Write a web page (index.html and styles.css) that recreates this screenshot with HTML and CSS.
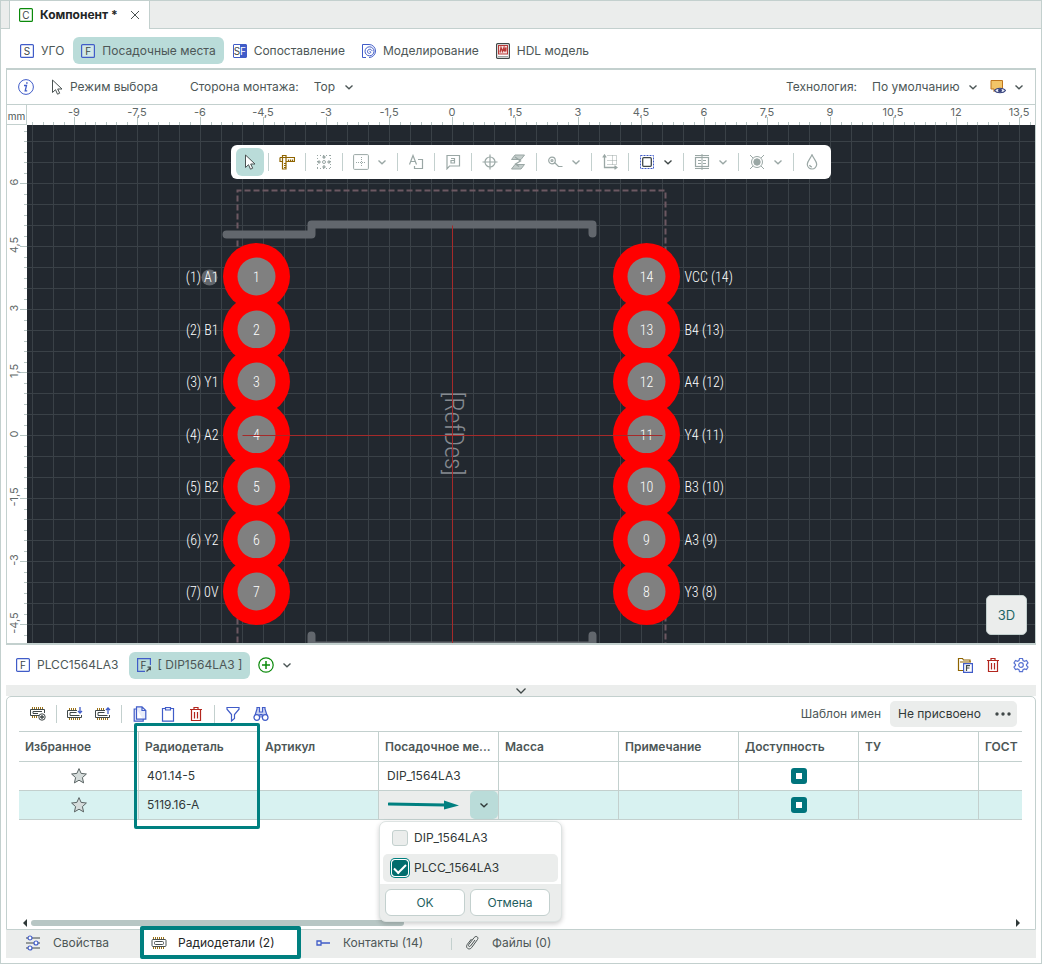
FILE: index.html
```html
<!DOCTYPE html>
<html lang="ru">
<head>
<meta charset="utf-8">
<title>Компонент</title>
<link rel="stylesheet" href="styles.css">
</head>
<body>
<svg class="sprite" aria-hidden="true">
  <symbol id="chevron" viewBox="0 0 10 10"><path d="M1.500 3.500 5 6.700 8.500 3.500" fill="none" stroke="currentColor" stroke-width="1.400"/></symbol>
  <symbol id="cursor" viewBox="0 0 16 16"><path d="M3.500 1v12.500l3-2.800 2 4.500 2.200-1-2-4.200h4.300z" fill="#fff" stroke="#4a5252" stroke-linejoin="round"/></symbol>
  <symbol id="sq" viewBox="0 0 14 14"><rect x=".6" y=".6" width="12.800" height="12.800" rx="1" fill="#fff" fill-opacity=".35" stroke="currentColor" stroke-width="1.200"/></symbol>
  <symbol id="trash" viewBox="0 0 16 16"><path d="M2 3.500h12M6 3V1.500h4V3M3.500 3.500v11h9v-11M6.500 6v6.500M9.500 6v6.500" fill="none" stroke="#b3261e" stroke-width="1.200"/></symbol>
  <symbol id="star" viewBox="0 0 16 16"><path d="m8 .6 2.100 4.800 5.300.6-4 3.600 1.200 5.300L8 12.200l-4.600 2.700 1.200-5.300L.6 6l5.300-.6z" fill="#d5dcdb" stroke="#5a6464" stroke-linejoin="round"/></symbol>
  <symbol id="chipbase" viewBox="0 0 16 16"><path d="M2.500 2v2M4.500 2v2M6.500 2v2M8.500 2v2M10.500 2v2M12.500 2v2M2.500 12v2M4.500 12v2M6.500 12v2M8.500 12v2M10.500 12v2M12.500 12v2" stroke="#9a7116"/><rect x="1" y="4.500" width="14" height="7" rx="1" fill="none" stroke="#4a5252"/><rect x="3.500" y="6.500" width="9" height="3" rx="1" fill="none" stroke="#4a5252"/></symbol>
</svg>

<div class="app">
  <header class="doc-tabs">
    <div class="doc-tab">
      <span class="letter green"><svg class="i14"><use href="#sq"/></svg><b>C</b></span>
      <strong>Компонент *</strong>
      <button class="close" type="button" aria-label="Закрыть"><svg viewBox="0 0 10 10" class="i10"><path d="m1 1 8 8M9 1 1 9" stroke="#4a5252" fill="none"/></svg></button>
    </div>
  </header>

  <nav class="modes">
    <button type="button" class="pill"><span class="letter"><svg class="i14"><use href="#sq"/></svg><b>S</b></span>УГО</button>
    <button type="button" class="pill active"><span class="letter"><svg class="i14"><use href="#sq"/></svg><b>F</b></span>Посадочные места</button>
    <button type="button" class="pill"><span class="letter duo"><b>S</b><b>F</b></span>Сопоставление</button>
    <button type="button" class="pill"><svg class="i14" viewBox="0 0 14 14" fill="none" stroke="#405cc8"><path d="M4 13.500H.5V.5H7a6.500 6.500 0 0 1 0 13"/><circle cx="7.500" cy="7.300" r="4.500"/><path d="M7.500 7.300a1.200 1.200 0 0 1 1.200 1.200c-.8 1.800-3.400.8-3.200-1.200.3-2.600 4-2.800 4.600-.2"/></svg>Моделирование</button>
    <button type="button" class="pill"><svg class="i14 tall" viewBox="0 0 14 16"><rect x=".6" y=".6" width="12.800" height="14.800" rx="1" fill="#fff" stroke="#404848" stroke-width="1.200"/><rect x="2.500" y="2.500" width="9" height="8.500" fill="#f6dcdb" stroke="#b83a38"/><path d="m4 9.500 1-5 1.500 4 1.500-4 .6 4 1.400-4-.2 4" fill="none" stroke="#b83a38" stroke-width="1.300"/><path d="M2.500 13.500h9" stroke="#404848" stroke-dasharray="1 1"/></svg>HDL модель</button>
  </nav>

  <main class="editor">
    <div class="options">
      <button class="bare info" type="button" aria-label="Информация"><svg class="i16" viewBox="0 0 16 16" fill="none" stroke="#405cc8"><circle cx="8" cy="8" r="7.400"/><path d="M6 6.500h2.500L7.200 11.800h2" stroke-width="1.300"/><circle cx="8.900" cy="4" r=".5"/></svg></button>
      <svg class="i16"><use href="#cursor"/></svg>
      <span class="mode-name">Режим выбора</span>
      <label for="side">Сторона монтажа:</label>
      <span class="pick"><select id="side"><option>Top</option></select><svg class="i10"><use href="#chevron"/></svg></span>
      <span class="grow"></span>
      <label for="tech">Технология:</label>
      <span class="pick"><select id="tech"><option>По умолчанию</option></select><svg class="i10"><use href="#chevron"/></svg></span>
      <button class="bare view" type="button" aria-label="Отображение"><svg class="i16" viewBox="0 0 16 16"><path d="M1 1.500h11.500V10H6.500L4 12.500V10H1z" fill="#f3c568" stroke="#c0761d"/><path d="M4.500 11.500c2-3 9-3 11 0-2 3-9 3-11 0z" fill="#e8ecf8" stroke="#39457e" stroke-width="1.200"/><circle cx="10" cy="11.500" r="2" fill="#39457e"/></svg><svg class="i10"><use href="#chevron"/></svg></button>
    </div>

    <div class="stage">
      <div class="corner">mm</div>
      <svg class="ruler" aria-hidden="true">
        <defs><pattern id="th" x="47" width="63" height="20" patternUnits="userSpaceOnUse"><path d="M.5 12v8M11.500 17v3M21.500 17v3M32.500 17v3M42.500 17v3M53.500 17v3" stroke="#b7c6c4"/></pattern></defs>
        <rect width="100%" height="20" fill="url(#th)"/>
        <g text-anchor="middle"><text x="47" y="11">-9</text><text x="110" y="11">-7,5</text><text x="173" y="11">-6</text><text x="236" y="11">-4,5</text><text x="299" y="11">-3</text><text x="362" y="11">-1,5</text><text x="425" y="11">0</text><text x="488" y="11">1,5</text><text x="551" y="11">3</text><text x="614" y="11">4,5</text><text x="677" y="11">6</text><text x="740" y="11">7,5</text><text x="803" y="11">9</text><text x="866" y="11">10,5</text><text x="929" y="11">12</text><text x="992" y="11">13,5</text></g>
      </svg>
      <svg class="ruler side" aria-hidden="true">
        <defs><pattern id="tv" y="58" width="20" height="63" patternUnits="userSpaceOnUse"><path d="M13 .5h7M17 11.500h3M17 21.500h3M17 32.500h3M17 42.500h3M17 53.500h3" stroke="#b7c6c4"/></pattern></defs>
        <rect width="20" height="100%" fill="url(#tv)"/>
        <g text-anchor="middle"><text transform="translate(11 57) rotate(-90)">6</text><text transform="translate(11 120) rotate(-90)">4,5</text><text transform="translate(11 183) rotate(-90)">3</text><text transform="translate(11 246) rotate(-90)">1,5</text><text transform="translate(11 309) rotate(-90)">0</text><text transform="translate(11 372) rotate(-90)">-1,5</text><text transform="translate(11 435) rotate(-90)">-3</text><text transform="translate(11 498) rotate(-90)">-4,5</text></g>
      </svg>

      <div class="canvas">
        <svg class="board" role="img" aria-label="Посадочное место DIP1564LA3">
          <defs>
            <pattern id="grid" x="5" y="16" width="21" height="21" patternUnits="userSpaceOnUse"><path d="M.5 0v21M0 .5h21" stroke="#3a4147"/></pattern>
            <g id="pad"><circle r="33.500" fill="#f00"/><circle r="19" fill="#808080"/></g>
          </defs>
          <rect width="100%" height="100%" fill="url(#grid)"/>
          <g transform="translate(425.500 310.500)">
            <path d="M-215 225V-245H213V225" fill="none" stroke="#6c5862" stroke-width="2" stroke-dasharray="6 3"/>
            <path d="M-226-201h85v-10h281v9M-141 200v10h281v-10" fill="none" stroke="#62676d" stroke-width="8" stroke-linecap="round" stroke-linejoin="round"/>
            <use href="#pad" x="-196" y="-159"/><use href="#pad" x="-196" y="-106"/><use href="#pad" x="-196" y="-54"/><use href="#pad" x="-196" y="-1"/><use href="#pad" x="-196" y="51"/><use href="#pad" x="-196" y="104"/><use href="#pad" x="-196" y="156"/>
            <use href="#pad" x="194" y="-159"/><use href="#pad" x="194" y="-106"/><use href="#pad" x="194" y="-54"/><use href="#pad" x="194" y="-1"/><use href="#pad" x="194" y="51"/><use href="#pad" x="194" y="104"/><use href="#pad" x="194" y="156"/>
            <circle cx="-243" cy="-158" r="8" fill="#62676d"/>
            <g class="pin" text-anchor="middle"><text x="-196" y="-154">1</text><text x="-196" y="-101">2</text><text x="-196" y="-49">3</text><text x="-196" y="4">4</text><text x="-196" y="56">5</text><text x="-196" y="109">6</text><text x="-196" y="161">7</text><text x="194" y="-154">14</text><text x="194" y="-101">13</text><text x="194" y="-49">12</text><text x="194" y="4">11</text><text x="194" y="56">10</text><text x="194" y="109">9</text><text x="194" y="161">8</text></g>
            <g class="pin" text-anchor="end"><text x="-234" y="-154">(1) A1</text><text x="-234" y="-101">(2) B1</text><text x="-234" y="-49">(3) Y1</text><text x="-234" y="4">(4) A2</text><text x="-234" y="56">(5) B2</text><text x="-234" y="109">(6) Y2</text><text x="-234" y="161">(7) 0V</text></g>
            <g class="pin"><text x="232" y="-154">VCC (14)</text><text x="232" y="-101">B4 (13)</text><text x="232" y="-49">A4 (12)</text><text x="232" y="4">Y4 (11)</text><text x="232" y="56">B3 (10)</text><text x="232" y="109">A3 (9)</text><text x="232" y="161">Y3 (8)</text></g>
            <text class="refdes" text-anchor="middle" transform="translate(-8 -2) rotate(90)">[RefDes]</text>
            <path d="M0-210V225M-210 0H210" stroke="#a52a2a"/>
          </g>
        </svg>

        <div class="floatbar tools" role="toolbar" aria-label="Инструменты">
          <button type="button" class="on" aria-label="Выбор"><svg class="i16"><use href="#cursor"/></svg></button><i></i>
          <button type="button" aria-label="Измерение"><svg class="i16" viewBox="0 0 16 16" fill="none" stroke="#8f6400" stroke-width="1.200"><path d="M3.500 1.500h3.500v13.500H3.500zM1 3.500h14.500v4H7M3.500 7.500H1v-4M7 9.500H5M7 11.500H5M7 13.500H5M9.500 5.500v2M11.500 5.500v2M13.500 5.500v2"/></svg></button><i></i>
          <button type="button" aria-label="Привязка"><svg class="i16" viewBox="0 0 16 16" fill="none" stroke="#9aa7a5"><path d="M1 1.500h14M1 14.500h14M1.500 1v14M14.500 1v14" stroke-dasharray="1 2"/><circle cx="8" cy="8" r="1.500"/><path d="M8 2v3M6.500 3.500 8 2l1.500 1.500M8 14v-3M6.500 12.500 8 14l1.500-1.500M2 8h3M3.500 6.500 2 8l1.500 1.500M14 8h-3M12.500 6.500 14 8l-1.500 1.500" stroke-width="1.200"/></svg></button><i></i>
          <button type="button" aria-label="Сетка"><svg class="i16" viewBox="0 0 16 16" fill="none" stroke="#9aa7a5"><rect x=".6" y=".6" width="14.800" height="14.800" rx="1"/><path d="M8.500 3v10M3 8.500h10" stroke-dasharray="1 1"/></svg></button><button type="button" class="more" aria-label="Ещё"><svg class="i10"><use href="#chevron"/></svg></button><i></i>
          <button type="button" aria-label="Текст"><svg class="i16" viewBox="0 0 16 16" fill="none" stroke="#9aa7a5" stroke-width="1.200"><path d="M1.500 10.500 5 1.500l3.500 9M2.700 7.500h4.600M10 5.500h4.500v9H6.500V12"/></svg></button><i></i>
          <button type="button" aria-label="Атрибут"><svg class="i16" viewBox="0 0 16 16" fill="none" stroke="#9aa7a5" stroke-width="1.200"><path d="M2 1.500h12.500v10.500H4.500L2 14.800z"/><path d="M6 4.500h3.500v4.500H6V6.500h3.500"/></svg></button><i></i>
          <button type="button" aria-label="Начало координат"><svg class="i16" viewBox="0 0 16 16" fill="none" stroke="#9aa7a5" stroke-width="1.200"><circle cx="8" cy="8" r="5"/><path d="M8 .5v15M.5 8h15"/></svg></button><button type="button" aria-label="Слои"><svg class="i16" viewBox="0 0 16 16" fill="#c4cdcb" stroke="#9aa7a5"><path d="M5 1h9.500L11 5.500H1.500zM5 10.500h9.500L11 15H1.500z"/><path d="m5 3 5.500 4-5 3L9 12.500" fill="none" stroke-width="1.300"/></svg></button><i></i>
          <button type="button" aria-label="Трасса"><svg class="i16" viewBox="0 0 16 16" fill="none" stroke="#9aa7a5" stroke-width="1.200"><circle cx="5" cy="6.500" r="3.300"/><circle cx="5" cy="6.500" r="1"/><path d="m7.500 8.500 4 4h4"/></svg></button><button type="button" class="more" aria-label="Ещё"><svg class="i10"><use href="#chevron"/></svg></button><i></i>
          <button type="button" aria-label="Координаты"><svg class="i16" viewBox="0 0 16 16" fill="none" stroke="#9aa7a5"><path d="M2.500 1v12.500H15M.8 3.500 2.500 1l1.700 2.500M12.500 11.800l2.500 1.700-2.500 1.700" stroke-width="1.300"/><path d="M5.500 1.500h9v9M5.500 6.500h9M10.500 1.500v9M5.500 10.500h9" stroke-dasharray="1 1"/></svg></button><i></i>
          <button type="button" aria-label="Область"><svg class="i16" viewBox="0 0 16 16" fill="none"><rect x="1.500" y="1.500" width="13" height="13" stroke="#405cc8" stroke-dasharray="2 1"/><rect x="3.700" y="3.700" width="8.600" height="8.600" rx="1" stroke="#404848" stroke-width="1.300"/></svg></button><button type="button" class="more dark" aria-label="Ещё"><svg class="i10"><use href="#chevron"/></svg></button><i></i>
          <button type="button" aria-label="Выравнивание"><svg class="i16" viewBox="0 0 16 16" fill="none" stroke="#9aa7a5"><path d="M1 1.500h14M1 14.500h14M8 0v3M8 13v3" /><rect x="1.500" y="3.500" width="13" height="9" stroke-width="1.200"/><path d="M4 6.500h3M9 6.500h3M4 9.500h3M9 9.500h3M8 4v8"/></svg></button><button type="button" class="more" aria-label="Ещё"><svg class="i10"><use href="#chevron"/></svg></button><i></i>
          <button type="button" aria-label="Яркость"><svg class="i16" viewBox="0 0 16 16" fill="none" stroke="#9aa7a5"><circle cx="8" cy="8" r="5.500"/><circle cx="8" cy="8" r="3.200" fill="#9aa7a5"/><path d="m1 1 3 3M15 1l-3 3M1 15l3-3M15 15l-3-3"/></svg></button><button type="button" class="more" aria-label="Ещё"><svg class="i10"><use href="#chevron"/></svg></button><i></i>
          <button type="button" aria-label="Заливка"><svg class="i16" viewBox="0 0 16 16" fill="none" stroke="#9aa7a5" stroke-width="1.200"><path d="M8 .8C6.500 4.500 3.300 7 3.300 10.300a4.700 4.700 0 0 0 9.400 0C12.700 7 9.500 4.500 8 .8zM5.500 11a3 3 0 0 0 2.500 2"/></svg></button>
        </div>
        <button type="button" class="three-d">3D</button>
      </div>
    </div>
  </main>

  <div class="footprints">
    <button type="button" class="pill"><span class="letter"><svg class="i14"><use href="#sq"/></svg><b>F</b></span>PLCC1564LA3</button>
    <button type="button" class="pill active"><span class="letter"><svg class="i14" viewBox="0 0 14 14" fill="none"><path d="M8 13.400H.6V.6h12.800V7" stroke="#405cc8" stroke-width="1.200"/><path d="m9.500 13.500 4-4M10.500 9.200h3v3" stroke="#4a5252" stroke-width="1.200"/></svg><b>F</b></span>[ DIP1564LA3 ]</button>
    <button type="button" class="bare add" aria-label="Добавить"><svg class="i16" viewBox="0 0 16 16" fill="none" stroke="#0b8a0b" stroke-width="1.200"><circle cx="8" cy="8" r="7.200"/><path d="M8 4v8M4 8h8" stroke-width="1.500"/></svg><svg class="i10"><use href="#chevron"/></svg></button>
    <span class="grow"></span>
    <div class="tools">
      <button type="button" aria-label="Из библиотеки"><svg class="i16" viewBox="0 0 16 16" fill="none"><path d="M6 13.500H1.500v-12h4l1 1.500H13v2M3 5h11" stroke="#8f6400" stroke-width="1.200"/><path d="M6.600 6.600h8.800v8.800H6.600z" fill="#fff" stroke="#405cc8" stroke-width="1.200"/><path d="M9.500 14V8.600h3.500M9.500 11h3" stroke="#404848" stroke-width="1.200"/></svg></button>
      <button type="button" aria-label="Удалить"><svg class="i16"><use href="#trash"/></svg></button>
      <button type="button" aria-label="Настройки"><svg class="i16" viewBox="0 0 16 16" fill="none" stroke="#5872d2" stroke-width="1.200"><path d="m6.500 1.500 3 0 .5 2 1.500.8 2-.8 1.500 2.500-1.500 1.500v1l1.500 1.500-1.500 2.600-2-.7-1.500.8-.5 2h-3l-.5-2-1.500-.8-2 .7L1 10l1.500-1.500v-1L1 6l1.500-2.500 2 .8L6 3.500z"/><circle cx="8" cy="8" r="2.300"/></svg></button>
    </div>
  </div>

  <button type="button" class="collapse" aria-label="Свернуть"><svg viewBox="0 0 12 12"><path d="m1.500 3.500 4.500 4.500 4.500-4.500" fill="none" stroke="#404848" stroke-width="1.300"/></svg></button>

  <section class="data">
    <div class="data-bar">
      <div class="tools">
        <button type="button" aria-label="Добавить деталь"><svg class="i16" viewBox="0 0 16 16"><path d="M2.500 1v2M4.500 1v2M6.500 1v2M8.500 1v2M10.500 1v2M12.500 1v2M2.500 10v2M4.500 10v2M6.500 10v2" stroke="#9a7116"/><path d="M9 9.500H.5v-6h14V7M8 7.500H3v-2h9" fill="none" stroke="#404848"/><circle cx="12" cy="11" r="3.200" fill="#fff" stroke="#404848"/><path d="M12 9v4M10 11h4" stroke="#404848" stroke-width="1.300"/></svg></button><i></i>
        <button type="button" aria-label="Импорт"><svg class="i16" viewBox="0 0 16 16"><path d="M2.500 2v2M4.500 2v2M6.500 2v2M8.500 2v2M2.500 12v2M4.500 12v2M6.500 12v2M8.500 12v2M10.500 12v2M12.500 12v2" stroke="#9a7116"/><path d="M10 4.500H.5v7h14V9M9.500 6.500H3v3h9.500" fill="none" stroke="#404848"/><path d="M13 1v6M11 5l2 2 2-2" fill="none" stroke="#405cc8" stroke-width="1.300"/></svg></button><button type="button" aria-label="Экспорт"><svg class="i16" viewBox="0 0 16 16"><path d="M2.500 2v2M4.500 2v2M6.500 2v2M8.500 2v2M2.500 12v2M4.500 12v2M6.500 12v2M8.500 12v2M10.500 12v2M12.500 12v2" stroke="#9a7116"/><path d="M10 4.500H.5v7h14V9M9.500 6.500H3v3h9.500" fill="none" stroke="#404848"/><path d="M13 8V2M11 4l2-2 2 2" fill="none" stroke="#405cc8" stroke-width="1.300"/></svg></button><i></i>
        <button type="button" aria-label="Копировать"><svg class="i16" viewBox="0 0 16 16" fill="#e9edfa" stroke="#405cc8" stroke-width="1.200"><path d="M4.500.8h5.500l3.800 3.700v8.700H4.500zM10 .8v3.700h3.800M4.500 3H2.200v12.200h9v-2"/></svg></button><button type="button" aria-label="Вставить"><svg class="i16" viewBox="0 0 16 16" fill="#fff" stroke="#405cc8" stroke-width="1.200"><path d="M2.500 2.500h11v12.700h-11z"/><path d="M5.500 1.500h5V4h-5z" fill="#e9edfa"/></svg></button><button type="button" aria-label="Удалить"><svg class="i16"><use href="#trash"/></svg></button><i></i>
        <button type="button" aria-label="Фильтр"><svg class="i16" viewBox="0 0 16 16" fill="#fff" stroke="#405cc8" stroke-width="1.200"><path d="M2 1.500h12v1.700L9.500 8.500v4l-3 2.500V8.500L2 3.200z"/></svg></button><button type="button" aria-label="Найти"><svg class="i16" viewBox="0 0 16 16" fill="#c9d2f2" stroke="#405cc8" stroke-width="1.200"><path d="M4 3V1.500h2.500V6h3V1.500H12V3l2.500 8H9V8.500H7V11H1.500z"/><circle cx="3.800" cy="11.500" r="2.800" fill="#fff"/><circle cx="12.200" cy="11.500" r="2.800" fill="#fff"/></svg></button>
      </div>
      <span class="grow"></span>
      <label for="tmpl">Шаблон имен</label>
      <span class="tmpl"><input id="tmpl" type="text" value="Не присвоено" readonly><button type="button" aria-label="Выбрать шаблон"><svg viewBox="0 0 16 4"><g fill="#404848"><circle cx="2" cy="2" r="1.700"/><circle cx="8" cy="2" r="1.700"/><circle cx="14" cy="2" r="1.700"/></g></svg></button></span>
    </div>

    <div class="table-wrap">
      <table>
        <thead><tr><th>Избранное</th><th>Радиодеталь</th><th>Артикул</th><th>Посадочное ме...</th><th>Масса</th><th>Примечание</th><th>Доступность</th><th>ТУ</th><th>ГОСТ</th></tr></thead>
        <tbody>
          <tr><td class="mid"><button type="button" class="bare" aria-label="В избранное"><svg class="i16"><use href="#star"/></svg></button></td><td>401.14-5</td><td></td><td>DIP_1564LA3</td><td></td><td></td><td class="mid"><input type="checkbox" class="partial" aria-label="Доступность 401.14-5"></td><td></td><td></td></tr>
          <tr class="sel"><td class="mid"><button type="button" class="bare" aria-label="В избранное"><svg class="i16"><use href="#star"/></svg></button></td><td>5119.16-A</td><td></td><td class="edit"><div class="combo"><svg class="arrow" viewBox="0 0 72 10"><path d="M1 4 57 5" stroke="#008080" stroke-width="3" stroke-linecap="round"/><path d="m56 .5 15 5-15 4z" fill="#008080"/></svg><button type="button" aria-label="Открыть список"><svg class="i10"><use href="#chevron"/></svg></button></div></td><td></td><td></td><td class="mid"><input type="checkbox" class="partial" aria-label="Доступность 5119.16-A"></td><td></td><td></td></tr>
        </tbody>
      </table>
    </div>
    <div class="hscroll"><svg viewBox="0 0 6 8"><path d="M5 0v8L1 4z" fill="#2f3838"/></svg><div class="track"><div class="thumb"></div></div><svg viewBox="0 0 6 8"><path d="M1 0v8l4-4z" fill="#2f3838"/></svg></div>

    <div class="mark column-mark"></div>
    <div class="popup">
      <div class="choices">
        <label><input type="checkbox">DIP_1564LA3</label>
        <label class="hover"><input type="checkbox" checked>PLCC_1564LA3</label>
      </div>
      <div class="actions"><button type="button">OK</button><button type="button">Отмена</button></div>
    </div>
  </section>

  <footer class="views">
    <button type="button" class="v-props"><svg class="i16" viewBox="0 0 16 16" fill="#fff"><path d="M1 3h14M1 8h14M1 13h14" stroke="#404848"/><g stroke="#405cc8" stroke-width="1.200"><circle cx="5" cy="3" r="2"/><circle cx="11" cy="8" r="2"/><circle cx="5" cy="13" r="2"/></g></svg>Свойства</button>
    <button type="button" class="current"><svg class="i16"><use href="#chipbase"/></svg>Радиодетали (2)</button>
    <button type="button" class="v-pins"><svg class="i16" viewBox="0 0 16 16" fill="none" stroke="#405cc8" stroke-width="1.300"><path d="M2 6h4v4H2zM6 8h9"/></svg>Контакты (14)</button><i></i>
    <button type="button" class="v-files"><svg class="i16" viewBox="0 0 16 16" fill="none" stroke="#4a5252"><path d="M11 5 6.500 11c-1 1.300-2.700 0-1.800-1.300l5.500-7.200c2-2.300 4.800-.2 3.300 2L7.700 12.500c-2.500 3.300-6.700.3-4.500-3L7.500 4"/></svg>Файлы (0)</button>
  </footer>
</div>
</body>
</html>
```
FILE: styles.css
```css
* { box-sizing: border-box; }
:root {
  --line: #c3d0ce;
  --panel: #ebedec;
  --accent: #badcd9;
  --text: #4d5757;
  --mark: #008080;
}
body { margin: 0; background: #fff; font: 12px/16px Inter, "Noto Sans", sans-serif; color: var(--text); }
button, input, select { font: inherit; color: inherit; margin: 0; padding: 0; border: 0; background: none; }
svg { display: block; flex: none; }
.sprite { position: absolute; width: 0; height: 0; }
.i10 { width: 10px; height: 10px; }
.i14 { width: 14px; height: 14px; }
.i14.tall { height: 16px; }
.i16 { width: 16px; height: 16px; }
.grow { flex: 1; }
.bare { display: flex; align-items: center; }
.app { display: flex; flex-direction: column; min-height: 100vh; border: 1px solid var(--line); padding-bottom: 5px; }

.doc-tabs { display: flex; height: 28px; padding-left: 8px; background: var(--panel); border-bottom: 1px solid var(--line); }
.doc-tab { display: flex; align-items: center; gap: 7px; height: 28px; padding: 0 9px; background: #fff; border: solid var(--line); border-width: 0 1px; color: #1f2626; }
.doc-tab strong { font-weight: 700; }
.close { display: flex; margin-left: 5px; }

.letter { position: relative; display: grid; place-items: center; width: 14px; height: 14px; color: #405cc8; }
.letter.green { color: #0b8a0b; }
.letter > * { grid-area: 1 / 1; }
.letter b { font-size: 10px; line-height: 14px; font-weight: 400; color: #404848; }
.letter.duo { grid-template-columns: 1fr 1fr; border: 1px solid #405cc8; border-radius: 1px; }
.letter.duo b { line-height: 12px; }
.letter.duo b + b { grid-area: 1 / 2; background: #405cc8; color: #fff; }

.modes { display: flex; align-items: center; gap: 1px; height: 39px; padding: 4px 11px 0; }
.pill { display: flex; align-items: center; gap: 7px; height: 27px; padding: 0 8px; border-radius: 6px; white-space: nowrap; }
.pill.active { background: var(--accent); }

.editor { display: flex; flex-direction: column; flex: 1; margin: 0 5px; border: 1px solid var(--line); border-width: 2px 1px; }
.options { display: flex; align-items: center; height: 35px; padding: 0 11px; border-bottom: 1px solid var(--line); }
.info { margin-right: 15px; }
.mode-name { margin: 0 32px 0 5px; }
.pick { position: relative; display: flex; align-items: center; margin-left: 15px; }
.pick select { appearance: none; padding-right: 18px; }
.pick svg { position: absolute; right: 0; pointer-events: none; }
.view { gap: 8px; margin-left: 12px; }

.stage { display: grid; grid-template: 20px 1fr / 20px 1fr; flex: 1; }
.corner { border: solid var(--line); border-width: 0 1px 1px 0; font-size: 10px; line-height: 22px; text-align: center; }
.ruler { width: 100%; height: 20px; font-size: 11px; fill: #5f6868; }
.ruler.side { width: 20px; height: 100%; }
.canvas { position: relative; min-height: 500px; background: #22282f; overflow: hidden; }
.board { position: absolute; inset: 0; width: 100%; height: 100%; }
.pin { font: 300 14px "Roboto Condensed", "Open Sans Condensed", Roboto, sans-serif; fill: #fff; }
.refdes { font: 300 26px "Roboto Condensed", "Open Sans Condensed", Roboto, sans-serif; fill: #858a90; }

.tools { display: flex; align-items: center; }
.tools button { display: grid; place-items: center; width: 28px; height: 28px; border-radius: 6px; }
.tools button.on { background: var(--accent); }
.tools button.more { width: 18px; padding-right: 4px; color: #9aa7a5; }
.tools button.dark { color: #404848; }
.tools i { width: 1px; height: 18px; margin: 0 4px; background: var(--line); }
.floatbar { position: absolute; top: 20px; left: 204px; height: 34px; padding: 0 5px; background: #fff; border-radius: 6px; }
.three-d { position: absolute; right: 8px; bottom: 8px; width: 41px; height: 40px; border: 1px solid var(--line); border-radius: 5px; background: var(--panel); color: #1f6666; font-size: 13px; }

.footprints { display: flex; align-items: center; height: 40px; padding: 0 6px 0 7px; }
.footprints .pill.active { margin-left: 2px; }
.add { gap: 8px; margin-left: 8px; }

.collapse { display: grid; place-items: center; height: 11px; margin: 0 5px; background: var(--panel); }
.collapse svg { width: 12px; height: 12px; }

.data { position: relative; display: flex; flex-direction: column; min-height: 234px; margin: 0 5px; border: 1px solid var(--line); border-radius: 5px 5px 0 0; }
.data-bar { display: flex; align-items: center; height: 34px; padding: 0 18px 0 17px; }
.tmpl { display: flex; align-items: center; width: 127px; height: 26px; margin-left: 9px; padding: 0 6px 0 8px; border-radius: 5px; background: var(--panel); color: #303838; }
.tmpl input { flex: 1; min-width: 0; }
.tmpl svg { width: 16px; height: 4px; }

.table-wrap { margin: 0 13px 0 12px; overflow: hidden; flex: 1; }
table { width: 1080px; table-layout: fixed; border-collapse: separate; border-spacing: 0; border-top: 1px solid var(--line); }
th, td { height: 29px; padding: 0 8px; border: solid var(--line); border-width: 0 1px 1px 0; text-align: left; white-space: nowrap; }
th { height: 30px; padding: 0 6px; font-weight: 600; }
td { color: #303838; }
.sel td { background: #d8f2f1; }
.mid { text-align: center; }
.mid > * { display: inline-block; vertical-align: middle; }
.sel td.edit { padding: 0; background: var(--panel); }
.combo { display: flex; align-items: center; justify-content: space-between; padding-left: 9px; }
.combo button { display: grid; place-items: center; width: 28px; height: 28px; border-radius: 5px; background: var(--accent); }
.arrow { width: 72px; height: 10px; }

input[type="checkbox"] { appearance: none; display: inline-grid; place-items: center; width: 16px; height: 16px; border: 1px solid var(--line); border-radius: 3px; background: var(--panel); }
input[type="checkbox"].partial { border: 0; background: #00747c; vertical-align: middle; }
input.partial::before { content: ""; width: 6px; height: 6px; background: #fff; }

.hscroll { display: flex; align-items: center; gap: 3px; height: 12px; padding: 0 14px 0 15px; }
.hscroll svg { width: 6px; height: 8px; }
.track { flex: 1; }
.thumb { width: 38%; height: 6px; border-radius: 3px; background: #b7c6c4; }

.mark { position: absolute; border: 3px solid var(--mark); border-radius: 2px; pointer-events: none; }
.column-mark { left: 127px; top: 26px; width: 126px; height: 106px; }

.popup { position: absolute; left: 372px; top: 124px; width: 183px; border: 1px solid #dde3e2; border-radius: 7px; background: var(--panel); box-shadow: 0 2px 5px #0003; }
.choices { padding: 2px 3px; border-radius: 6px 6px 0 0; background: #fff; color: #303838; }
.choices label { display: flex; align-items: center; gap: 6px; height: 28px; padding-left: 9px; border-radius: 5px; }
.choices label + label { margin-top: 2px; }
.choices .hover { background: var(--panel); }
.choices input[type="checkbox"]:checked { border-color: #006d6d; background: #006d6d; box-shadow: 0 0 0 1px #fff, 0 0 0 2px #008080; }
.choices input:checked::before { content: ""; width: 10px; height: 5px; border: solid #fff; border-width: 0 0 2px 2px; rotate: -45deg; translate: 0 -1px; }
.actions { display: flex; gap: 5px; padding: 5px; }
.actions button { width: 80px; height: 27px; border: 1px solid var(--line); border-radius: 6px; background: #fff; color: #1f5f5f; }

.views { display: flex; height: 28px; margin: 0 5px; background: var(--panel); }
.views button { display: flex; align-items: center; gap: 12px; height: 26px; white-space: nowrap; }
.v-props { width: 134px; padding-left: 19px; }
.views .current { position: relative; gap: 11px; width: 161px; height: 33px; margin-top: -4px; padding-left: 7px; border: 4px solid var(--mark); border-radius: 2px; background: #fff; color: #1f2626; }
.v-pins { padding: 0 28px 0 14px; }
.views i { width: 1px; height: 12px; margin-top: 8px; background: var(--line); }
.v-files { padding-left: 12px; }
```
